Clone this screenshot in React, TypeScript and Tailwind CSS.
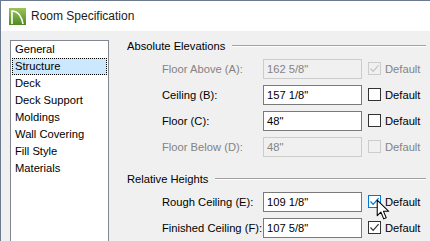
import React from 'react'

const font = { fontFamily: '"Segoe UI", "Liberation Sans", Arial, sans-serif' }

function Check({ checked, disabled, hover }: { checked?: boolean; disabled?: boolean; hover?: boolean }) {
  const border = disabled ? 'border-[#cccccc] bg-[#f0f0f0]' : hover ? 'border-[#0078d7] bg-white' : 'border-[#333333] bg-white'
  const stroke = disabled ? '#c4c4c4' : hover ? '#0078d7' : '#333333'
  return (
    <div className={`w-[13px] h-[13px] border ${border} flex items-center justify-center`}>
      {checked && (
        <svg width="11" height="11" viewBox="0 0 11 11">
          <path d="M1.5 5.5 L4.2 8.3 L9.6 2.2" fill="none" stroke={stroke} strokeWidth="1.2" />
        </svg>
      )}
    </div>
  )
}

function Row({
  label,
  value,
  disabled,
  checked,
  hover,
}: {
  label: string
  value: string
  disabled?: boolean
  checked?: boolean
  hover?: boolean
}) {
  const text = disabled ? 'text-[#838383]' : 'text-[#000000]'
  return (
    <div className="flex items-center h-[20px]">
      <div className={`w-[101px] whitespace-nowrap text-[11.2px] ${text}`}>{label}</div>
      <div
        className={`w-[99px] h-[20px] border flex items-center pl-[3px] text-[11.2px] whitespace-nowrap ${
          disabled ? 'border-[#cccccc] bg-[#f0f0f0] text-[#838383]' : 'border-[#7a7a7a] bg-white text-black'
        }`}
      >
        {value}
      </div>
      <div className="ml-[6px] flex items-center gap-[4px] relative">
        <Check checked={checked} disabled={disabled} hover={hover} />
        <span className={`text-[11.2px] ${text}`}>Default</span>
        {hover && (
          <svg className="absolute left-[8px] top-[5px]" width="15" height="23" viewBox="0 0 14 22">
            <path
              d="M1 1 L1 16 L4.5 12.5 L7.2 19 L9.6 18 L7 11.8 L12 11.8 Z"
              fill="#ffffff"
              stroke="#000000"
              strokeWidth="1"
              strokeLinejoin="round"
            />
          </svg>
        )}
      </div>
    </div>
  )
}

function Group({ title, children }: { title: string; children: React.ReactNode }) {
  return (
    <div>
      <div className="flex items-center h-[14px] pl-[18px] pr-[4px]">
        <span className="text-[11.2px] text-black whitespace-nowrap">{title}</span>
        <div className="flex-1 ml-[7px] border-t border-[#a0a0a0] border-b border-b-white" />
      </div>
      <div className="pl-[53px] flex flex-col gap-[6px] mt-[6px]">{children}</div>
    </div>
  )
}

export default function App() {
  const items = ['General', 'Structure', 'Deck', 'Deck Support', 'Moldings', 'Wall Covering', 'Fill Style', 'Materials']
  return (
    <div style={font} className="w-[430px] h-[241px] overflow-hidden border-l border-t border-[#6b7a8f] bg-[#f0f0f0]">
      <div className="h-[30px] bg-white flex items-center pl-[8px]">
        <svg width="17" height="17" viewBox="0 0 17 17">
          <defs>
            <linearGradient id="g" x1="0" y1="0" x2="0" y2="1">
              <stop offset="0" stopColor="#9ac45a" />
              <stop offset="1" stopColor="#4f8a22" />
            </linearGradient>
          </defs>
          <rect width="17" height="17" fill="url(#g)" />
          <path d="M3 16 L3 3 C9 3 13 9 14 16" fill="none" stroke="#ffffff" strokeWidth="1.6" />
        </svg>
        <span className="ml-[5px] text-[12px] text-[#1b1b1b]">Room Specification</span>
      </div>
      <div className="flex">
        <div className="ml-[9px] mt-[9px] w-[99px] h-[220px] border border-[#828790] bg-white px-[1px]">
          {items.map((it) => (
            <div
              key={it}
              className={`h-[17px] flex items-center text-[11.2px] text-black whitespace-nowrap ${
                it === 'Structure' ? 'bg-[#cce8ff] border border-dotted border-black pl-[2px]' : 'pl-[3px]'
              }`}
            >
              {it}
            </div>
          ))}
        </div>
        <div className="flex-1 pt-[8px]">
          <Group title="Absolute Elevations">
            <Row label="Floor Above (A):" value={'162 5/8"'} disabled checked />
            <Row label="Ceiling (B):" value={'157 1/8"'} />
            <Row label="Floor (C):" value={'48"'} />
            <Row label="Floor Below (D):" value={'48"'} disabled />
          </Group>
          <div className="mt-[15px]">
            <Group title="Relative Heights">
              <Row label="Rough Ceiling (E):" value={'109 1/8"'} checked hover />
              <Row label="Finished Ceiling (F):" value={'107 5/8"'} checked />
            </Group>
          </div>
        </div>
      </div>
    </div>
  )
}
